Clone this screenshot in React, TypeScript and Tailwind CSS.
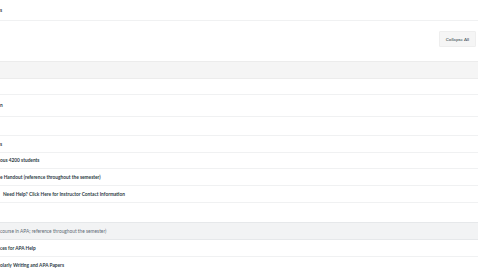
import { FC } from 'react';

const Row: FC<{ text?: string; h: string; pl?: string; border?: boolean }> = ({ text, h, pl = 'pl-0', border = true }) => (
  <div className={`${h} ${pl} flex items-center bg-white ${border ? 'border-b border-[#f0f1f2]' : ''}`}>
    {text ? <span className="font-bold text-[#2d3b45] whitespace-nowrap">{text}</span> : null}
  </div>
);

export const App: FC = () => {
  return (
    <div className="w-[478px] h-[269px] overflow-hidden bg-white text-[4.8px] leading-none" style={{ fontFamily: 'Lato, "Noto Sans", sans-serif' }}>
      <Row text="s" h="h-[21px]" />

      <div className="h-[40px] flex items-start justify-end pt-[10px] pr-[2px]">
        <button className="h-[16px] w-[37px] bg-[#f5f5f5] border border-[#eeeeee] rounded-[1px] text-[#2d3b45] text-[4.6px] flex items-center justify-center">
          Collapse All
        </button>
      </div>

      <div className="h-[18px] bg-[#f5f5f5] border-y border-[#ececec]" />

      <Row h="h-[16px]" />
      <Row text="n" h="h-[22px]" />
      <Row h="h-[19px]" />
      <Row text="s" h="h-[17px]" />
      <Row text="ous 4200 students" h="h-[16px]" />
      <Row text="e Handout (reference throughout the semester)" h="h-[17px]" />
      <Row text="Need Help? Click Here for Instructor Contact Information" h="h-[17px]" pl="pl-[3px]" />
      <Row h="h-[19px]" border={false} />

      <div className="h-[18px] bg-[#f2f3f4] border-y border-[#e6e8ea] flex items-center">
        <span className="text-[#5f6b75] whitespace-nowrap">course in APA; reference throughout the semester)</span>
      </div>

      <Row text="ces for APA Help" h="h-[17px]" />
      <Row text="olarly Writing and APA Papers" h="h-[17px]" />
    </div>
  );
};

export default App;
